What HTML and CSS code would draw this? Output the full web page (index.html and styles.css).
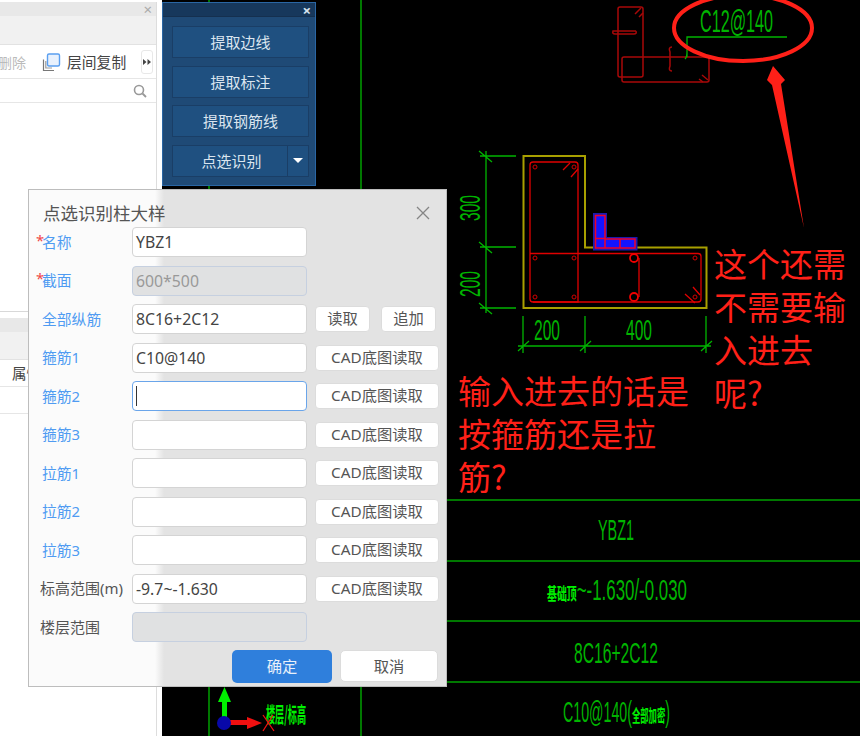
FILE: index.html
```html
<!DOCTYPE html>
<html lang="zh-CN">
<head>
<meta charset="utf-8">
<title>点选识别柱大样</title>
<link rel="stylesheet" href="styles.css">
</head>
<body>
<div class="desk">
  <aside class="side">
    <section class="pane pane-top">
      <div class="pane-head"><span class="pane-x">×</span></div>
      <div class="pane-sub"></div>
      <div class="tools">
        <span class="tool-off">删除</span>
        <svg class="copy-icon" width="20" height="20" viewBox="0 0 20 20">
          <path d="M2.500 7.500V18.500H13" fill="none" stroke="#777" stroke-width="1.200"/>
          <path d="M4.800 9V16H11" fill="none" stroke="#999" stroke-width="1.200"/>
          <rect x="6.500" y="2" width="12" height="12" rx="1.500" fill="#e8f1fd" stroke="#5a9ff0" stroke-width="1.400"/>
        </svg>
        <span class="tool-on">层间复制</span>
        <span class="more">
          <svg width="8" height="6" viewBox="0 0 8 6"><path d="M0 0L3.500 3L0 6ZM4.500 0L8 3L4.500 6Z" fill="#444"/></svg>
        </span>
      </div>
      <div class="search">
        <svg width="14" height="14" viewBox="0 0 14 14"><circle cx="6" cy="6" r="4.500" fill="none" stroke="#999" stroke-width="1.600"/><path d="M9.500 9.500L13 13" stroke="#999" stroke-width="1.800"/></svg>
      </div>
      <div class="pane-body"></div>
    </section>
    <section class="pane pane-low">
      <div class="pane-head low-head"></div>
      <div class="pane-sub low-sub"></div>
      <div class="prop-row">属性</div>
      <div class="prop-row blank"></div>
    </section>
  </aside>

  <main class="cad">
    <svg class="drawing" width="698" height="736" viewBox="162 0 698 736">
      <g class="grid-lines">
        <path d="M209 0V736M361 0V736"/>
        <path d="M361 500H860M361 561H860M361 621H860M361 682H860"/>
      </g>

      <g class="old-bars">
        <rect x="618" y="7" width="25" height="70" rx="2"/>
        <rect x="622" y="57" width="87" height="25" rx="2"/>
        <path d="M636 31H613Q612 34 615 34H634Q637 34 636 31M672 47Q668 47 670 52V66Q668 71 672 71M635 14L641 8M639 17L643 13M702 75L708 80M699 79L703 82"/>
      </g>

      <g class="dim">
        <path d="M486 151V313M480 156H516M480 247H516M480 308H516M479 151L492 162M479 242L492 253M479 303L492 314"/>
        <path d="M518 346H711M523 316V353M585 316V353M706 316V353M518 351L529 341M580 351L591 341M701 351L712 341"/>
        <path d="M687 57V37H787M687 52Q687 57 685 59"/>
      </g>

      <path class="concrete" d="M523.500 156H585V247.500H706.500V308H523.500Z"/>

      <g class="rebar">
        <path d="M533 162H575Q578 162 578 165V302H533Q530 302 530 299V165Q530 162 533 162Z"/>
        <path d="M530 253.500H698Q701 253.500 701 256.500V299Q701 302 698 302H533"/>
        <path d="M563 170L570 163M571 177L578 169M685 294L695 303M693 287L700 295M639 258V297"/>
        <circle cx="535" cy="167" r="2"/><circle cx="574" cy="167" r="2"/>
        <circle cx="535" cy="258" r="2"/><circle cx="574" cy="258" r="2"/>
        <circle cx="535" cy="297" r="2"/><circle cx="574" cy="297" r="2"/>
        <circle cx="695" cy="258" r="2"/><circle cx="695" cy="297" r="2"/>
        <circle class="tie" cx="634" cy="258" r="4"/><circle class="tie" cx="634" cy="297" r="4"/>
      </g>

      <path class="pick-fill" d="M594 214H606V238H636.500V249.500H594Z"/>
      <path class="pick-line" d="M595.500 215.500H605V239H635V248H595.500ZM595.500 238.500H605M605 239V248M620 239V248"/>

      <text class="cad-text" transform="translate(480 208) rotate(-90)" text-anchor="middle" textLength="26" lengthAdjust="spacingAndGlyphs">300</text>
      <text class="cad-text" transform="translate(480 284) rotate(-90)" text-anchor="middle" textLength="26" lengthAdjust="spacingAndGlyphs">200</text>
      <text class="cad-text" x="534" y="340" textLength="26" lengthAdjust="spacingAndGlyphs">200</text>
      <text class="cad-text" x="626" y="340" textLength="26" lengthAdjust="spacingAndGlyphs">400</text>
      <text class="cad-text cad-big" x="700" y="32" textLength="73" lengthAdjust="spacingAndGlyphs">C12@140</text>
      <text class="cad-text" x="598" y="540" textLength="36" lengthAdjust="spacingAndGlyphs">YBZ1</text>
      <text class="cad-text" x="547" y="600" textLength="140" lengthAdjust="spacingAndGlyphs"><tspan class="cad-blob">基础顶</tspan>~-1.630/-0.030</text>
      <text class="cad-text" x="574" y="663" textLength="84" lengthAdjust="spacingAndGlyphs">8C16+2C12</text>
      <text class="cad-text" x="563" y="722" textLength="107" lengthAdjust="spacingAndGlyphs">C10@140(<tspan class="cad-blob">全部加密</tspan>)</text>
      <text class="cad-blob cad-tag" x="266" y="722" textLength="40" lengthAdjust="spacingAndGlyphs">楼层/标高</text>

      <g class="ucs">
        <path class="ucs-y" d="M224.500 687L231 702H227V718H222V702H218Z"/>
        <path class="ucs-x" d="M230 720H247V717L262 723L247 729V725H230Z"/>
        <circle class="ucs-o" cx="224" cy="723" r="7"/>
        <path class="ucs-mark" d="M263 715L274 731M273 715L263 731"/>
      </g>

      <ellipse class="mark-ring" cx="743" cy="28" rx="69" ry="33"/>
      <path class="mark-arrow" d="M773 66L785 80L781 84L804 228L772 85L767 80Z"/>
    </svg>

    <section class="extract">
      <div class="extract-head"><span class="extract-x">×</span></div>
      <div class="extract-body">
        <div class="ex-btn">提取边线</div>
        <div class="ex-btn">提取标注</div>
        <div class="ex-btn">提取钢筋线</div>
        <div class="ex-split">
          <div class="ex-btn ex-main">点选识别</div>
          <div class="ex-btn ex-caret"><span class="caret"></span></div>
        </div>
      </div>
    </section>

    <p class="note note-right">这个还需<br>不需要输<br>入进去<br>呢?</p>
    <p class="note note-left">输入进去的话是<br>按箍筋还是拉<br>筋?</p>
  </main>

  <section class="dialog">
    <header class="dialog-head">
      <h1 class="dialog-title">点选识别柱大样</h1>
      <svg class="dialog-x" width="14" height="14" viewBox="0 0 14 14"><path d="M1 1L13 13M13 1L1 13" stroke="#858585" stroke-width="1.300"/></svg>
    </header>
    <div class="form">
      <div class="row"><span class="label link req">名称</span><div class="field">YBZ1</div></div>
      <div class="row"><span class="label link req">截面</span><div class="field off">600*500</div></div>
      <div class="row"><span class="label link">全部纵筋</span><div class="field">8C16+2C12</div>
        <div class="acts"><span class="btn small">读取</span><span class="btn small">追加</span></div></div>
      <div class="row"><span class="label link">箍筋1</span><div class="field">C10@140</div><span class="btn">CAD底图读取</span></div>
      <div class="row"><span class="label link">箍筋2</span><div class="field focus"><i class="text-caret"></i></div><span class="btn">CAD底图读取</span></div>
      <div class="row"><span class="label link">箍筋3</span><div class="field"></div><span class="btn">CAD底图读取</span></div>
      <div class="row"><span class="label link">拉筋1</span><div class="field"></div><span class="btn">CAD底图读取</span></div>
      <div class="row"><span class="label link">拉筋2</span><div class="field"></div><span class="btn">CAD底图读取</span></div>
      <div class="row"><span class="label link">拉筋3</span><div class="field"></div><span class="btn">CAD底图读取</span></div>
      <div class="row"><span class="label plain">标高范围(m)</span><div class="field">-9.7~-1.630</div><span class="btn">CAD底图读取</span></div>
      <div class="row"><span class="label plain">楼层范围</span><div class="field off"></div></div>
    </div>
    <footer class="dialog-foot">
      <span class="btn primary">确定</span>
      <span class="btn cancel">取消</span>
    </footer>
  </section>
</div>
</body>
</html>
```

FILE: styles.css
```css
* { box-sizing: border-box; }
html, body { margin: 0; padding: 0; background: #000; }
body { font-family: "Noto Sans", "Noto Sans CJK SC", sans-serif; font-size: 15px; color: #444; }

.desk { position: relative; display: flex; width: 860px; height: 736px; overflow: hidden; }

/* left docked panels */
.side { display: flex; flex-direction: column; width: 162px; height: 736px; background: #fff; padding-top: 2px; }
.pane { width: 157px; background: #fff; border-right: 1px solid #ddd; }
.pane-top { height: 309px; display: flex; flex-direction: column; }
.pane-low { flex: 1; border-top: 1px solid #d8d8d8; padding-top: 6px; }
.pane-head { height: 14px; background: #e8e8e8; display: flex; justify-content: flex-end; align-items: center; padding-right: 4px; }
.pane-x { font-size: 15px; line-height: 14px; color: #aaa; }
.pane-sub { height: 29px; background: #f1f1f1; border-bottom: 1px solid #e2e2e2; }
.tools { height: 34px; display: flex; align-items: center; border-bottom: 1px solid #e6e6e6; flex: none; }
.tool-off { width: 28px; color: #bbb; font-size: 14px; margin-left: -2px; margin-right: 15px; white-space: nowrap; flex: none; }
.copy-icon { flex: none; margin-right: 6px; }
.tool-on { font-size: 14.800px; white-space: nowrap; color: #444; width: 60px; flex: none; }
.more { margin-left: 14px; width: 12px; height: 24px; background: #fff; border: 1px solid #e8e8e8; border-radius: 3px; display: flex; align-items: center; justify-content: center; flex: none; }
.search { height: 24px; display: flex; justify-content: flex-end; align-items: center; padding-right: 9px; border-bottom: 1px solid #e6e6e6; flex: none; }
.pane-body { flex: 1; }
.low-head { height: 14px; }
.low-sub { height: 28px; }
.prop-row { height: 27px; padding-left: 12px; line-height: 27px; font-size: 14.500px; border-bottom: 1px solid #e6e6e6; }
.prop-row.blank { height: 27px; }

/* CAD canvas */
.cad { position: relative; flex: 1; height: 736px; background: #000; }
.drawing { display: block; }
.grid-lines path { fill: none; stroke: #00a000; stroke-width: 1.500; }
.old-bars rect, .old-bars path { fill: none; stroke: #a80808; stroke-width: 1.500; }
.dim path { fill: none; stroke: #00b400; stroke-width: 1.300; }
.concrete { fill: none; stroke: #a8a000; stroke-width: 2; }
.rebar path { fill: none; stroke: #e00000; stroke-width: 1.300; }
.rebar circle { fill: none; stroke: #d00000; stroke-width: 1; }
.rebar .tie { stroke: #f00000; stroke-width: 1.800; }
.pick-fill { fill: #1414ff; stroke: #1a1ab0; stroke-width: 2; }
.pick-line { fill: none; stroke: #f00028; stroke-width: 1.500; }
.cad-text { font-family: "Liberation Sans", "Noto Sans CJK SC", sans-serif; font-size: 29px; fill: #00b400; }
.cad-big { font-size: 32px; }
.cad-blob { font-family: "Noto Sans CJK SC", sans-serif; font-size: 17px; font-weight: 700; fill: #00f000; }
.cad-tag { font-size: 21px; }
.ucs-y { fill: #00f000; }
.ucs-x { fill: #f01010; }
.ucs-o { fill: #0808a8; }
.ucs-mark { fill: none; stroke: #f01010; stroke-width: 1.300; }
.mark-ring { fill: none; stroke: #ff2018; stroke-width: 4; }
.mark-arrow { fill: #ff2018; }

/* floating extract toolbar */
.extract { position: absolute; left: 0; top: 2px; width: 154px; height: 184px; background: #1f4a76; border: 1px solid #2a66a4; display: flex; flex-direction: column; }
.extract-head { height: 14px; background: #17385c; border-bottom: 1px solid #15304f; display: flex; justify-content: flex-end; align-items: center; padding-right: 4px; flex: none; }
.extract-x { color: #d8e4ef; font-size: 15px; font-weight: 700; line-height: 14px; }
.extract-body { display: flex; flex-direction: column; gap: 7.500px; padding: 9px 6px 0 9px; }
.ex-btn { height: 32px; background: #1f5080; border: 1px solid #1a3e66; color: #dbe5ef; font-size: 15px; line-height: 31px; text-align: center; }
.ex-split { display: flex; }
.ex-main { flex: 1; padding-left: 3px; }
.ex-caret { width: 21px; display: flex; align-items: center; justify-content: center; border-left: 0; }
.caret { width: 0; height: 0; border-left: 5px solid transparent; border-right: 5px solid transparent; border-top: 5px solid #fff; }

/* red annotations */
.note { position: absolute; margin: 0; color: #ff2018; font-family: "Noto Sans CJK SC", sans-serif; font-size: 33px; line-height: 43px; white-space: nowrap; }
.note-right { left: 552px; top: 242px; }
.note-left { left: 296px; top: 369px; }

/* dialog */
.dialog { position: absolute; left: 28px; top: 189px; width: 419px; height: 498px; border: 1px solid #bdbdbd; background: linear-gradient(90deg, #fbfbfb 0, #fbfbfb 126px, #e3e3e3 135px, #e3e3e3 100%); }
.dialog-head { height: 33px; position: relative; padding: 14px 0 0 14px; }
.dialog-title { margin: 0; font-size: 17.500px; font-weight: 400; line-height: 19px; color: #555; white-space: nowrap; }
.dialog-x { position: absolute; right: 16px; top: 16px; }
.form { padding-left: 13px; }
.row { display: flex; align-items: center; height: 38.500px; }
.label { width: 90px; flex: none; font-size: 14.800px; padding-bottom: 2px; color: #555; white-space: nowrap; position: relative; }
.plain { margin-left: -2px; width: 92px; font-size: 15px; }
.link { color: #4f9bf2; }
.req::before { content: "*"; color: #f04848; position: absolute; left: -6px; top: -1px; }
.field { width: 175px; height: 30px; flex: none; background: #fff; border: 1px solid #d4d4d4; border-radius: 4px; padding-left: 3px; line-height: 29px; font-size: 15.800px; color: #444; margin-right: 8px; white-space: nowrap; }
.field.off { background: #e0e1e2; border-color: #c6d0e0; color: #999; }
.field.focus { border-color: #6aa5ea; border-width: 1.500px; display: flex; align-items: center; }
.text-caret { display: block; width: 1px; height: 20px; background: #333; }
.acts { display: flex; gap: 11px; }
.btn { display: block; width: 124px; height: 26px; flex: none; background: #fff; border: 1px solid #dcdcdc; border-radius: 4px; text-align: center; line-height: 23px; font-size: 15.300px; color: #555; white-space: nowrap; }
.btn.small { width: 55px; }
.dialog-foot { display: flex; justify-content: flex-end; align-items: center; gap: 8px; padding: 3px 8px 0 0; }
.btn.primary { width: 100px; height: 33px; line-height: 33px; background: #2f7fdc; border: 0; border-radius: 5px; color: #e8f0fa; }
.btn.cancel { width: 98px; height: 32px; line-height: 30px; border-radius: 5px; }
```
